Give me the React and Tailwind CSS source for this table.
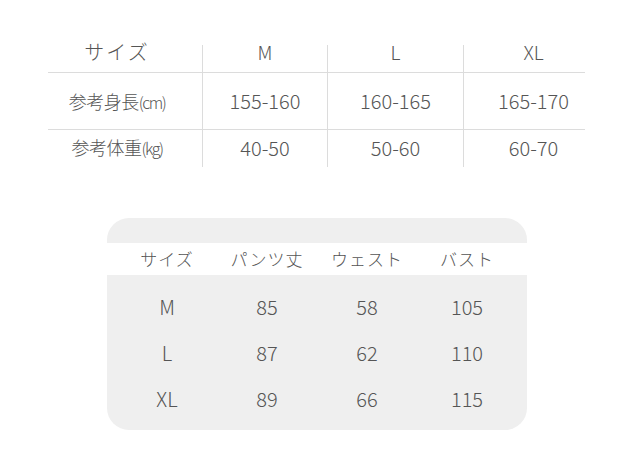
const sizes = [
  { label: 'M', height: '155-160', weight: '40-50' },
  { label: 'L', height: '160-165', weight: '50-60' },
  { label: 'XL', height: '165-170', weight: '60-70' },
];

const pants = [
  ['M', '85', '58', '105'],
  ['L', '87', '62', '110'],
  ['XL', '89', '66', '115'],
];

const colW = ['w-[154px] pr-[16px]', 'w-[125px]', 'w-[136px]', 'w-[122px] pl-[18px]'];

export default function App() {
  return (
    <div
      className="w-[640px] h-[455px] bg-white text-[#555555] overflow-hidden"
      style={{ fontFamily: '"Noto Sans CJK JP", "Noto Sans", sans-serif' }}
    >
      {/* Reference size chart */}
      <div className="ml-[48px] mt-[45px] w-[537px]">
        <div className="flex h-[28px] border-b border-[#dcdcdc]">
          <div className={`${colW[0]} flex justify-center`}>
            <span className="block -mt-[3px] leading-[20px] text-[20px] font-light tracking-[2px]">サイズ</span>
          </div>
          {sizes.map((s, i) => (
            <div key={s.label} className={`${colW[i + 1]} flex justify-center border-l border-[#dcdcdc]`}>
              <span className="block -mt-[3px] leading-[20px] text-[19px] font-light">{s.label}</span>
            </div>
          ))}
        </div>
        <div className="flex h-[57px] border-b border-[#dcdcdc]">
          <div className={`${colW[0]} flex items-center justify-center`}>
            <span className="text-[18px] font-light tracking-[-0.5px]">
              参考身長<span className="text-[16px] tracking-[-1.5px]">(cm)</span>
            </span>
          </div>
          {sizes.map((s, i) => (
            <div key={s.label} className={`${colW[i + 1]} flex items-center justify-center border-l border-[#dcdcdc]`}>
              <span className="text-[20px] font-light">{s.height}</span>
            </div>
          ))}
        </div>
        <div className="flex h-[37px]">
          <div className={`${colW[0]} flex items-center justify-center pb-[2px]`}>
            <span className="text-[18px] font-light tracking-[-0.5px]">
              参考体重<span className="text-[16px] tracking-[-1.5px]">(kg)</span>
            </span>
          </div>
          {sizes.map((s, i) => (
            <div key={s.label} className={`${colW[i + 1]} flex items-center justify-center border-l border-[#dcdcdc] pb-[2px]`}>
              <span className="text-[20px] font-light">{s.weight}</span>
            </div>
          ))}
        </div>
      </div>

      {/* Pants measurements */}
      <div className="ml-[107px] mt-[51px] w-[420px] h-[212px] rounded-[22px] bg-[#efefef] pt-[25px]">
        <div className="flex h-[32px] bg-white px-[10px]">
          {['サイズ', 'パンツ丈', 'ウェスト', 'バスト'].map((h) => (
            <div key={h} className="w-[100px] flex items-center justify-center">
              <span className="text-[17px] font-light tracking-[1px]">{h}</span>
            </div>
          ))}
        </div>
        <div className="pt-[9px] px-[10px]">
          {pants.map((row) => (
            <div key={row[0]} className="flex h-[46px]">
              {row.map((v, i) => (
                <div key={i} className="w-[100px] flex items-center justify-center">
                  <span className="text-[20px] font-light">{v}</span>
                </div>
              ))}
            </div>
          ))}
        </div>
      </div>
    </div>
  );
}
